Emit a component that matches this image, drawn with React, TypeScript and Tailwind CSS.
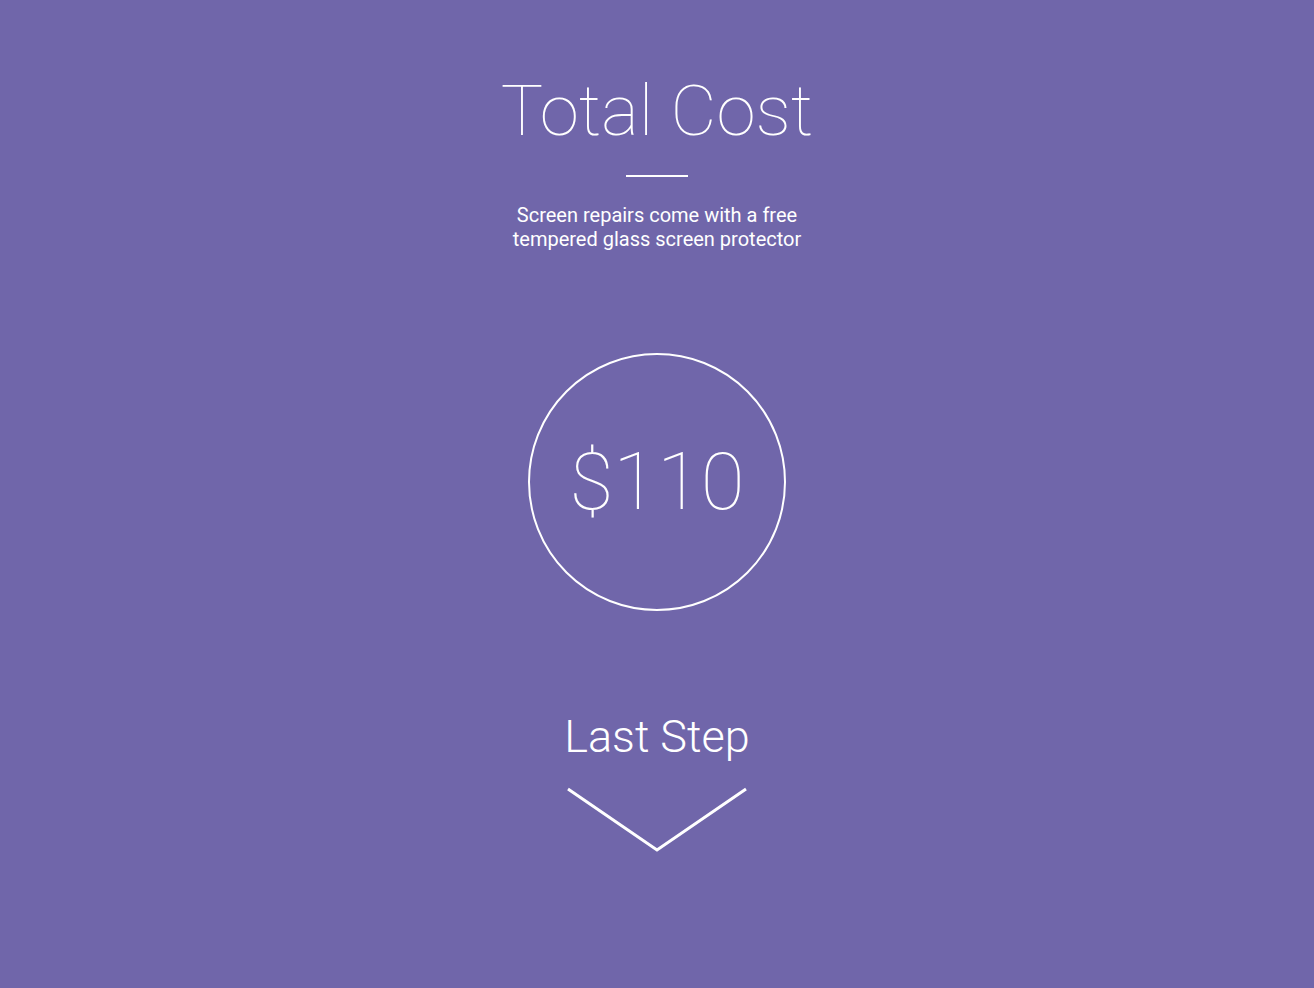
export default function App() {
  return (
    <div
      className="min-h-[988px] w-full bg-[#7066aa] text-white flex flex-col items-center"
      style={{ fontFamily: "Roboto, 'Liberation Sans', sans-serif" }}
    >
      <h1 className="mt-[68px] text-[71px] leading-[86px] font-thin">
        Total Cost
      </h1>
      <div className="mt-[21px] h-[2px] w-[62px] bg-white" />
      <p className="mt-[26px] text-[20px] leading-[24px] text-center">
        Screen repairs come with a free
        <br />
        tempered glass screen protector
      </p>
      <div className="mt-[102px] w-[258px] h-[258px] rounded-full border-2 border-white flex items-center justify-center">
        <span className="text-[80px] font-thin leading-none">$110</span>
      </div>
      <div className="mt-[98px] text-[45px] font-light leading-[56px]">
        Last Step
      </div>
      <svg
        className="mt-[22px]"
        width="182"
        height="66"
        viewBox="0 0 182 66"
        fill="none"
      >
        <polyline
          points="2,2 91,63 180,2"
          stroke="white"
          strokeWidth="3"
          strokeLinejoin="miter"
        />
      </svg>
    </div>
  );
}
